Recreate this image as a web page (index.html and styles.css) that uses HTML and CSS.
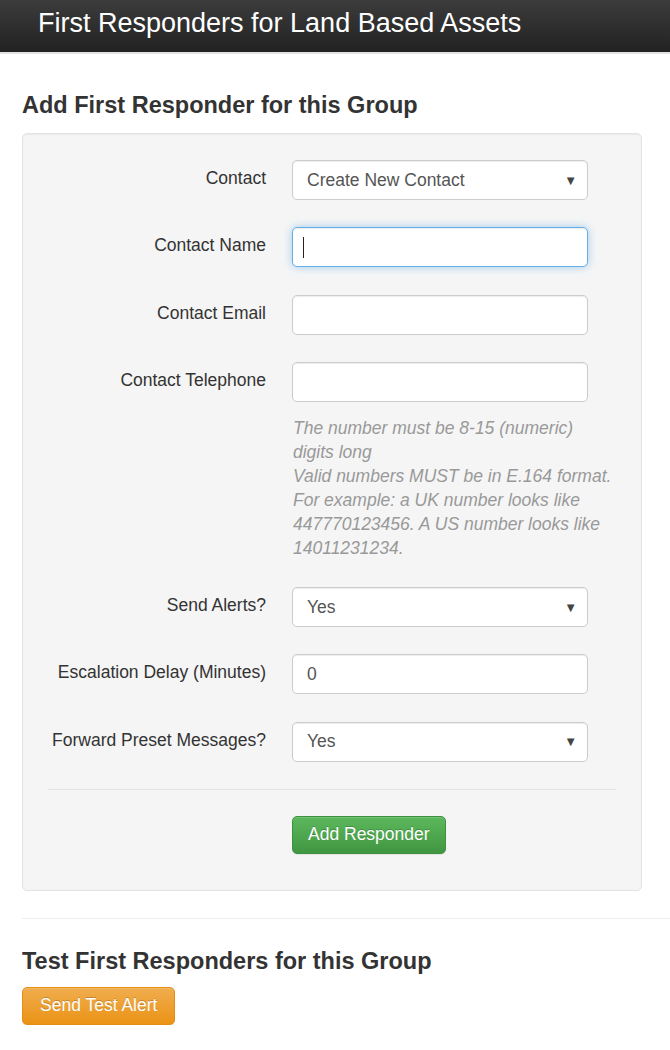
FILE: index.html
```html
<!DOCTYPE html>
<html>
<head>
<meta charset="utf-8">
<link rel="stylesheet" href="styles.css">
</head>
<body>
<header class="navbar">
  <div class="brand">First Responders for Land Based Assets</div>
</header>
<main class="content">
  <h3 class="heading">Add First Responder for this Group</h3>
  <div class="well">
    <div class="form">
      <div class="row">
        <label class="label">Contact</label>
        <div class="control select"><span>Create New Contact</span><span class="arrow">&#9660;</span></div>
      </div>
      <div class="row">
        <label class="label">Contact Name</label>
        <div class="control focus"><span class="caret"></span></div>
      </div>
      <div class="row">
        <label class="label">Contact Email</label>
        <div class="control"></div>
      </div>
      <div class="row">
        <label class="label">Contact Telephone</label>
        <div class="field">
          <div class="control"></div>
          <p class="help">The number must be 8-15 (numeric) digits long<br>Valid numbers MUST be in E.164 format. For example: a UK number looks like 447770123456. A US number looks like 14011231234.</p>
        </div>
      </div>
      <div class="row">
        <label class="label">Send Alerts?</label>
        <div class="control select"><span>Yes</span><span class="arrow">&#9660;</span></div>
      </div>
      <div class="row">
        <label class="label">Escalation Delay (Minutes)</label>
        <div class="control"><span>0</span></div>
      </div>
      <div class="row">
        <label class="label">Forward Preset Messages?</label>
        <div class="control select"><span>Yes</span><span class="arrow">&#9660;</span></div>
      </div>
    </div>
    <hr class="rule">
    <div class="actions">
      <button class="btn btn-success">Add Responder</button>
    </div>
  </div>
  <hr class="rule-wide">
  <h3 class="heading heading2">Test First Responders for this Group</h3>
  <button class="btn btn-warning">Send Test Alert</button>
</main>
</body>
</html>
```
FILE: styles.css
```css
html, body {
  margin: 0;
  padding: 0;
  background: #fff;
}
body {
  font-family: "Liberation Sans", Arial, sans-serif;
  font-size: 17.5px;
  color: #333;
}
.navbar {
  height: 52px;
  background: linear-gradient(to bottom, #3c3c3c 0%, #222 100%);
  border-bottom: 2px solid #e2e2e2;
  display: flex;
  align-items: center;
  padding-left: 38px;
  box-sizing: content-box;
}
.brand {
  color: #fff;
  font-size: 27px;
  line-height: 1;
  margin-top: -6px;
}
.content {
  padding: 0 0 0 22px;
}
.heading {
  margin: 0;
  padding-top: 39px;
  font-size: 23.5px;
  font-weight: bold;
  line-height: 1.1;
  color: #333;
  height: 40px;
}
.well {
  width: 620px;
  box-sizing: border-box;
  margin-top: 0;
  background: #f5f5f5;
  border: 1px solid #e3e3e3;
  border-radius: 5px;
  box-shadow: inset 0 1px 1px rgba(0,0,0,.05);
  padding: 26px 25px 36px 25px;
}
.form {
  display: flex;
  flex-direction: column;
  gap: 27.3px;
}
.row {
  display: grid;
  grid-template-columns: 218px 296px;
  column-gap: 26px;
  align-items: start;
}
.label {
  text-align: right;
  padding-top: 7px;
  line-height: 22px;
}
.control {
  height: 40px;
  box-sizing: border-box;
  background: #fff;
  border: 1px solid #ccc;
  border-radius: 5px;
  box-shadow: inset 0 1px 1px rgba(0,0,0,.075);
  padding: 0 14px;
  display: flex;
  align-items: center;
  color: #555;
}
.select {
  justify-content: space-between;
  padding-right: 10px;
}
.arrow {
  font-size: 13px;
  color: #444;
}
.focus {
  border-color: #66afe9;
  box-shadow: inset 0 1px 1px rgba(0,0,0,.075), 0 0 8px rgba(102,175,233,.6);
  padding-left: 10px;
}
.caret {
  display: block;
  width: 1px;
  height: 21px;
  background: #222;
}
.help {
  width: 320px;
  margin: 14px 0 0 1px;
  font-style: italic;
  color: #999;
  line-height: 24px;
}
.rule {
  border: 0;
  border-top: 1px solid #e3e3e3;
  margin: 27px 0 26px 0;
}
.actions {
  padding-left: 244px;
}
.btn {
  font-family: "Liberation Sans", Arial, sans-serif;
  font-size: 17.5px;
  height: 38px;
  padding: 0 15px;
  border-radius: 5px;
  color: #fff;
  text-shadow: 0 -1px 0 rgba(0,0,0,.2);
  box-shadow: inset 0 1px 0 rgba(255,255,255,.15), 0 1px 1px rgba(0,0,0,.075);
  cursor: pointer;
}
.btn-success {
  background: linear-gradient(to bottom, #5cb85c 0%, #419641 100%);
  border: 1px solid #3e8f3e;
}
.btn-warning {
  background: linear-gradient(to bottom, #f0ad4e 0%, #eb9316 100%);
  border: 1px solid #e38d13;
  padding: 0 17px;
}
.rule-wide {
  border: 0;
  border-top: 1px solid #eee;
  margin: 27px 0 0 0;
}
.heading2 {
  padding-top: 30px;
  height: 38px;
  margin-bottom: 0;
}
```
